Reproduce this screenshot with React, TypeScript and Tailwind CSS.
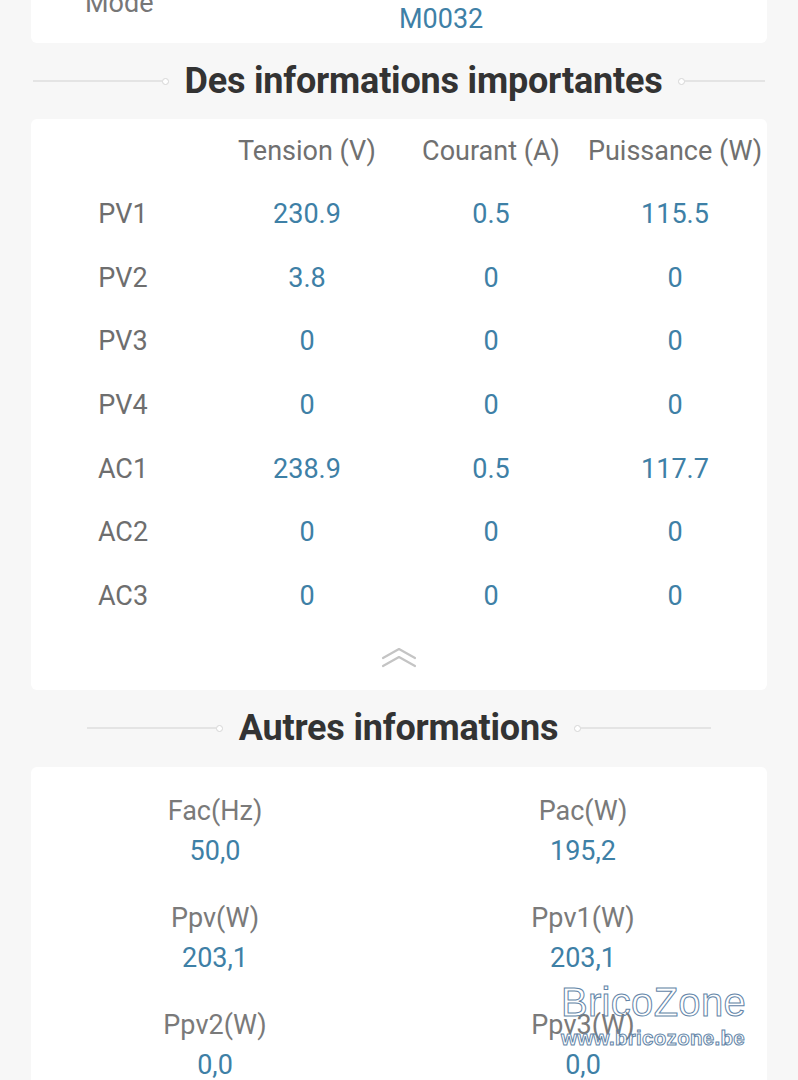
import React from "react";

const rows: [string, string, string, string][] = [
  ["PV1", "230.9", "0.5", "115.5"],
  ["PV2", "3.8", "0", "0"],
  ["PV3", "0", "0", "0"],
  ["PV4", "0", "0", "0"],
  ["AC1", "238.9", "0.5", "117.7"],
  ["AC2", "0", "0", "0"],
  ["AC3", "0", "0", "0"],
];

const others: [string, string][] = [
  ["Fac(Hz)", "50,0"],
  ["Pac(W)", "195,2"],
  ["Ppv(W)", "203,1"],
  ["Ppv1(W)", "203,1"],
  ["Ppv2(W)", "0,0"],
  ["Ppv3(W)", "0,0"],
];

function Dot() {
  return <span className="block w-[7px] h-[7px] rounded-full border border-[#d6d6d6] bg-white shrink-0" />;
}

function SectionTitle({ title, left, right }: { title: string; left: string; right: string }) {
  return (
    <div className="flex items-center justify-center">
      <span className={`h-[2px] shrink-0 bg-[#e4e4e4] ${left}`} />
      <Dot />
      <h2 className="mx-[16px] text-[36px] leading-[42px] font-bold tracking-[-0.2px] text-[#333333] whitespace-nowrap">{title}</h2>
      <Dot />
      <span className={`h-[2px] shrink-0 bg-[#e4e4e4] ${right}`} />
    </div>
  );
}

function DoubleChevron() {
  return (
    <svg width="36" height="24" viewBox="0 0 36 24" fill="none" stroke="#c4c4c4" strokeWidth="2.2" strokeLinecap="round" strokeLinejoin="round">
      <polyline points="2,11 18,2 34,11" />
      <polyline points="2,19 18,10 34,19" />
    </svg>
  );
}

export default function App() {
  return (
    <div
      className="relative h-[1080px] w-[798px] overflow-hidden bg-[#f7f7f7] px-[31px]"
      style={{ fontFamily: "Roboto, 'Noto Sans', Arial, sans-serif" }}
    >
      {/* Mode card, scrolled partly out of view */}
      <div className="-mt-[13px] flex items-start rounded-[6px] bg-white pb-[8px]">
        <div className="w-[368px] pl-[54px] text-[27px] leading-[32px] text-[#777777]">Mode</div>
        <div className="mt-[16px] text-[27px] leading-[32px] text-[#3e80a6]">M0032</div>
      </div>

      <div className="flex h-[76px] items-center justify-center">
        <SectionTitle title="Des informations importantes" left="w-[129px]" right="w-[80px]" />
      </div>

      {/* Main readings table */}
      <div className="rounded-[6px] bg-white">
        <div className="grid h-[63.6px] grid-cols-4 items-center text-center text-[27px] text-[#707070]">
          <span />
          <span>Tension (V)</span>
          <span>Courant (A)</span>
          <span className="whitespace-nowrap">Puissance (W)</span>
        </div>
        {rows.map((r) => (
          <div key={r[0]} className="grid h-[63.6px] grid-cols-4 items-center text-center text-[27px]">
            <span className="text-[#6e6e6e]">{r[0]}</span>
            <span className="text-[#3e80a6]">{r[1]}</span>
            <span className="text-[#3e80a6]">{r[2]}</span>
            <span className="text-[#3e80a6]">{r[3]}</span>
          </div>
        ))}
        <div className="flex h-[62px] items-center justify-center">
          <DoubleChevron />
        </div>
      </div>

      <div className="flex h-[77px] items-center justify-center">
        <SectionTitle title="Autres informations" left="w-[129px]" right="w-[130px]" />
      </div>

      {/* Secondary values */}
      <div className="grid grid-cols-2 gap-y-[35px] rounded-[6px] bg-white pt-[28px] pb-[30px] text-center text-[27px]">
        {others.map(([k, v]) => (
          <div key={k} className="flex flex-col items-center">
            <span className="leading-[32px] text-[#7a7a7a]">{k}</span>
            <span className="mt-[8px] leading-[32px] text-[#3e80a6]">{v}</span>
          </div>
        ))}
      </div>

      {/* Site watermark */}
      <div
        className="pointer-events-none absolute left-[561px] top-[979px] flex flex-col items-start text-transparent [-webkit-text-stroke:1px_#6385a8]"
        style={{ fontFamily: "'Liberation Sans', Arial, sans-serif" }}
      >
        <span className="text-[40px] leading-[46px] tracking-[0.3px]">BricoZone</span>
        <span className="mt-[1px] text-[20.5px] font-bold leading-[24px] tracking-[0.3px]">www.bricozone.be</span>
      </div>
    </div>
  );
}
